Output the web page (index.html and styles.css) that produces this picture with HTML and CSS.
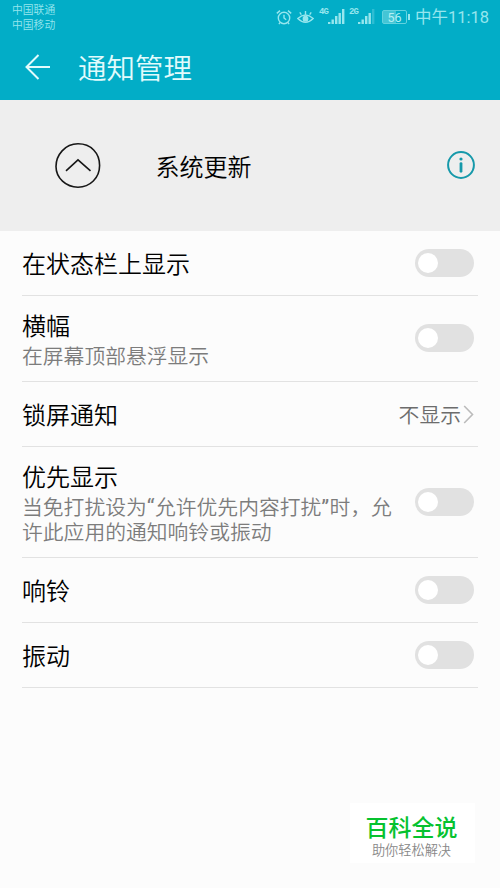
FILE: index.html
```
<!DOCTYPE html>
<html lang="zh-CN">
<head>
<meta charset="utf-8">
<title>通知管理</title>
<link rel="stylesheet" href="styles.css">
</head>
<body>
<div class="screen">
  <header class="header">
    <div class="status">
      <div class="carriers"><span>中国联通</span><span>中国移动</span></div>
      <div class="indicators">
        <svg class="alarm" width="16" height="17" viewBox="0 0 16 17"><circle cx="8" cy="9" r="5.7"/><path d="M8 5.8V9l2.2 1.8M.8 4.4 4 1.6M15.2 4.4 12 1.6M4.2 13.4l-1.3 1.7M11.8 13.4l1.3 1.7"/></svg>
        <svg class="eye" width="17" height="17" viewBox="0 0 17 17"><path d="M.8 9.5Q8.5 2.5 16.2 9.5Q8.5 17.2.8 9.5ZM8.5 5.3V2M4.3 5.7 2.8 3.4M12.7 5.7l1.5-2.3"/><circle cx="8.5" cy="9.7" r="2.2"/></svg>
        <span class="net">4G</span>
        <svg class="signal" width="17" height="16" viewBox="0 0 17 16"><path d="M0 13h2.4v2H0zM3.5 10.5h2.4V15H3.5zM7 7h2.4v8H7zM10.5 4h2.4v11h-2.4zM14 0h2.4v15H14z"/></svg>
        <span class="net net-two">2G</span>
        <svg class="signal" width="17" height="16" viewBox="0 0 17 16"><path d="M0 13h2.4v2H0zM3.5 10.5h2.4V15H3.5zM7 7h2.4v8H7zM10.5 4h2.4v11h-2.4z"/><path class="faint" d="M14 0h2.4v15H14z"/></svg>
        <span class="battery">56</span>
        <span class="time">中午11:18</span>
      </div>
    </div>
    <div class="toolbar">
      <svg class="back" width="26" height="26" viewBox="0 0 26 26"><path d="M25 13H1.5M13.5 1 1.5 13l12 12"/></svg>
      <h1>通知管理</h1>
    </div>
  </header>

  <section class="app">
    <svg class="app-icon" width="48" height="48" viewBox="0 0 48 48"><path d="M24 1.8C37 1.8 45.6 11 45.6 23.5S36 45.2 24 45.2 2 36 2 24.5 11 1.8 24 1.8Z"/><path d="m12 28.8 12-11 12.5 11"/></svg>
    <h2>系统更新</h2>
    <svg class="info" width="28" height="28" viewBox="0 0 28 28"><circle cx="14" cy="14" r="12.9"/><path d="M14 12.6v7.7"/><circle class="dot" cx="14" cy="8" r="1.6"/></svg>
  </section>

  <main class="list">
    <div class="row single"><div class="label">在状态栏上显示</div><span class="toggle"></span></div>
    <div class="row banner"><div><div class="label">横幅</div><p>在屏幕顶部悬浮显示</p></div><span class="toggle"></span></div>
    <div class="row single"><div class="label">锁屏通知</div><div class="value">不显示<svg width="11" height="19" viewBox="0 0 11 19"><path d="m1.2 1 8.3 8.5L1.2 18"/></svg></div></div>
    <div class="row priority"><div><div class="label">优先显示</div><p>当免打扰设为<span class="quote">“</span>允许优先内容打扰<span class="quote">”</span>时，允<br>许此应用的通知响铃或振动</p></div><span class="toggle"></span></div>
    <div class="row single"><div class="label">响铃</div><span class="toggle"></span></div>
    <div class="row single"><div class="label">振动</div><span class="toggle"></span></div>
  </main>

  <aside class="brand"><strong>百科全说</strong><span>助你轻松解决</span></aside>
</div>
</body>
</html>
```
FILE: styles.css
```
* { box-sizing: border-box; }
body { margin: 0; font-family: "Noto Sans CJK SC", sans-serif; }
h1, h2, p { margin: 0; font-weight: 350; }
svg { flex: none; fill: none; }
.screen { position: relative; width: 500px; height: 888px; background: #fcfcfc; overflow: hidden; }

.header { height: 100px; background: #02adc7; color: #e2fbfc; }
.status { display: flex; justify-content: space-between; height: 35px; padding: 2px 11px 0 12px; color: #96e6ee; }
.carriers { display: flex; flex-direction: column; font-size: 10.8px; line-height: 15px; font-weight: 350; }
.indicators { display: flex; align-items: center; height: 30px; }
.alarm, .eye { stroke: #96e6ee; stroke-width: 1.4; }
.eye { margin-left: 5px; }
.eye circle { fill: #96e6ee; }
.net { align-self: flex-start; margin: 6px 0 0 5px; width: 9px; font: 700 9px/9px "Liberation Mono", monospace; letter-spacing: -0.8px; white-space: nowrap; }
.net-two { margin-left: 4px; }
.signal { fill: #96e6ee; }
.signal .faint { opacity: .3; }
.battery { position: relative; width: 25px; height: 14px; margin-left: 7px; border: 1px solid #62d2df; border-radius: 2px; background: linear-gradient(90deg, #45c5d5 55%, transparent 55%); font: 12.5px/13px Roboto, sans-serif; text-align: center; color: #b5f0f4; }
.battery::after { content: ""; position: absolute; left: 25px; top: 3px; width: 2px; height: 6px; background: #96e6ee; }
.time { width: 74px; margin: 2px 0 0 8px; font: 400 16.5px/24px Roboto, "Noto Sans CJK SC", sans-serif; white-space: nowrap; }
.toolbar { display: flex; align-items: center; height: 64px; padding-left: 25px; }
.back { stroke: #e2fbfc; stroke-width: 2; }
.toolbar h1 { margin-left: 27px; font-size: 28.5px; line-height: 40px; }

.app { display: flex; align-items: center; height: 131px; padding: 0 25px 0 54px; background: #eee; }
.app-icon { stroke: #171717; stroke-width: 1.6; }
.app h2 { flex: 1; margin-left: 53.5px; font-size: 24px; line-height: 36px; color: #000; }
.info { margin-top: -1px; stroke: #1699aa; stroke-width: 2; }
.info path { stroke-width: 2.8; stroke-linecap: round; }
.info .dot { fill: #1699aa; stroke: none; }

.list { padding: 0 22px; }
.row { display: flex; align-items: center; justify-content: space-between; padding-right: 4px; border-bottom: 1px solid #e2e2e2; }
.single { height: 65px; }
.banner { height: 86px; }
.priority { height: 111px; }
.label { font-size: 24px; line-height: 36px; color: #000; font-weight: 350; }
.single .label { margin-top: -1px; }
.banner .label { margin-top: -3px; }
.priority .label { margin-top: -3px; }
.row p { margin-top: 0; font-size: 20.8px; line-height: 25px; color: #7c7c7c; white-space: nowrap; }
.quote { display: inline-block; width: 8.2px; font: 400 22px/20px Roboto, sans-serif; }
.toggle { flex: none; width: 59px; height: 28px; padding: 4px 3px; border-radius: 14px; background: #e1e1e1; }
.banner .toggle { margin-top: -1px; }
.toggle::before { content: ""; display: block; width: 20px; height: 20px; border-radius: 50%; background: #fff; }
.value { display: flex; align-items: center; font-size: 20.8px; color: #6c6c6c; font-weight: 350; }
.value svg { margin-left: 2px; stroke: #bbb; stroke-width: 1.6; }

.brand { position: absolute; left: 350px; top: 803px; width: 125px; height: 60px; padding: 7px 2px 0 0; background: #fff; text-align: center; }
.brand strong { display: block; font-size: 23px; line-height: 32px; font-weight: 500; color: #06c22f; }
.brand span { display: block; margin-top: -1px; font-size: 13.2px; line-height: 18px; color: #888; font-weight: 350; }
```
